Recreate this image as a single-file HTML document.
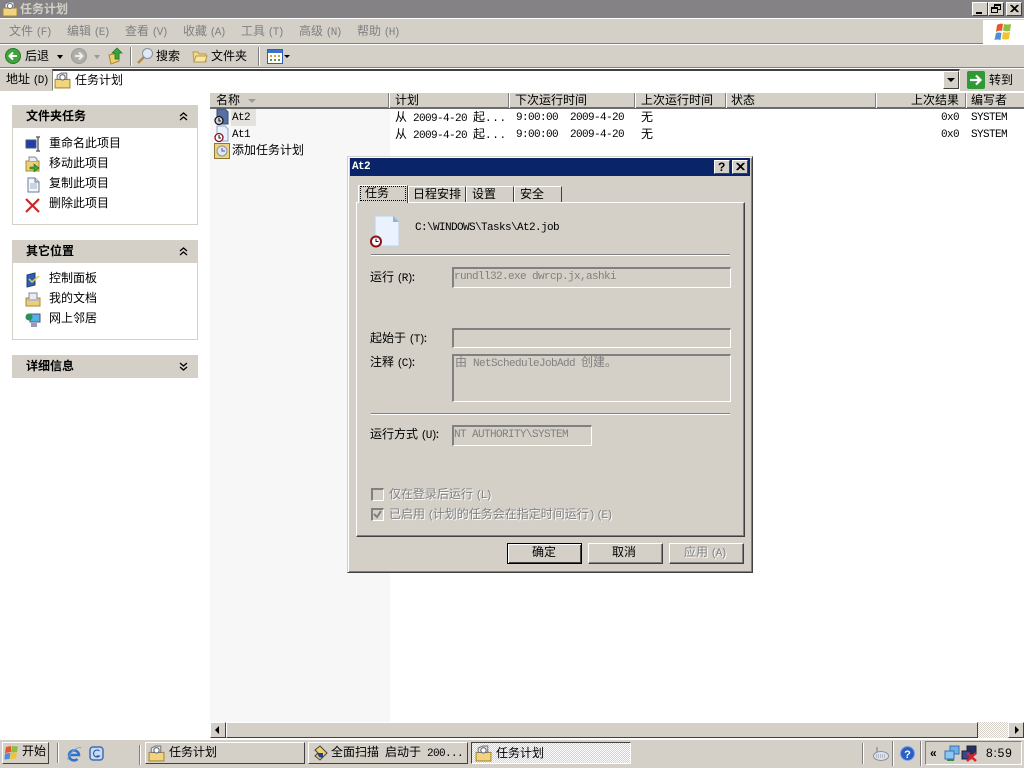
<!DOCTYPE html>
<html><head><meta charset="utf-8"><title>任务计划</title>
<style>
html,body{margin:0;padding:0;width:1024px;height:768px;overflow:hidden;background:#fff}
body{position:relative;font:12px/14px "WenQuanYi Zen Hei","Noto Sans CJK SC",sans-serif;color:#000}
div,span,svg{position:absolute;box-sizing:border-box}
span{white-space:pre}
span span,span b{position:static}
body>span{margin-top:-1px}
.m{font-family:"Liberation Mono",monospace;font-size:11px;letter-spacing:-.6px}
body>.m{margin-top:1px}
.k{font-family:"Liberation Mono",monospace;font-size:11px;letter-spacing:-1.6px}
.g{color:#808080}
.d{color:#808080;text-shadow:1px 1px 0 #fff}
.b{font-weight:bold}
.bg{background:#d4d0c8}
.ra{border:1px solid;border-color:#fff #404040 #404040 #fff;background:#d4d0c8}
.sk{border:1px solid;border-color:#808080 #fff #fff #808080;background:#d4d0c8;border-left-width:2px;border-top-width:2px}
.hr{height:2px;border-top:1px solid #808080;border-bottom:1px solid #fff}
.tb{top:742px;height:22px;border:1px solid;border-color:#fff #404040 #404040 #fff;background:#d4d0c8}
.dither{background:repeating-conic-gradient(#fff 0 25%,#d4d0c8 0 50%) 0 0/2px 2px}
.hs{top:93px;width:2px;height:15px;background:#808080;border-right:1px solid #fff}
.sb{left:12px;width:186px;background:#d4d0c8;height:23px}
.sbody{left:12px;width:186px;border:1px solid #d4d0c8;border-top:0;background:#fff}
</style></head><body>

<!-- title bar -->
<div style="left:0;top:0;width:1024px;height:18px;background:#848284"></div>
<svg style="left:2px;top:1px" width="16" height="16" viewBox="0 0 16 16"><path d="M1 7h14v8H1z" fill="#f3d47e" stroke="#a98a35"/><path d="M3 7V3l4-2h5v6z" fill="#e8eef4" stroke="#777"/><circle cx="8" cy="5" r="2.500" fill="#fff" stroke="#667"/></svg>
<span style="left:20px;top:3px;color:#d4d0c8;font-weight:bold">任务计划</span>
<div class="ra" style="left:972px;top:2px;width:16px;height:14px"><div style="left:3px;top:9px;width:6px;height:2px;background:#000"></div></div>
<div class="ra" style="left:988px;top:2px;width:16px;height:14px"><div style="left:5px;top:1px;width:7px;height:6px;border:1px solid #000;border-top-width:2px"></div><div style="left:2px;top:4px;width:7px;height:6px;border:1px solid #000;border-top-width:2px;background:#d4d0c8"></div></div>
<div class="ra" style="left:1006px;top:2px;width:16px;height:14px"><svg style="left:2px;top:1px" width="11" height="10" viewBox="0 0 11 10"><path d="M1.500 1l7 7M2.500 1l7 7M8.500 1l-7 7M9.500 1l-7 7" stroke="#000" stroke-width="1"/></svg></div>

<!-- chrome -->
<div class="bg" style="left:0;top:18px;width:1024px;height:74px"></div>
<div style="left:0;top:18px;width:1024px;height:1px;background:#fff"></div>
<div style="left:0;top:43px;width:983px;height:1px;background:#808080"></div>
<div style="left:0;top:44px;width:1024px;height:1px;background:#fff"></div>
<div style="left:0;top:67px;width:1024px;height:1px;background:#808080"></div>
<div style="left:0;top:68px;width:1024px;height:1px;background:#fff"></div>
<div style="left:0;top:91px;width:1024px;height:1px;background:#fff"></div>

<!-- menu -->
<span class="g" style="left:9px;top:25px">文件 <span class="k">(F)</span></span>
<span class="g" style="left:67px;top:25px">编辑 <span class="k">(E)</span></span>
<span class="g" style="left:125px;top:25px">查看 <span class="k">(V)</span></span>
<span class="g" style="left:183px;top:25px">收藏 <span class="k">(A)</span></span>
<span class="g" style="left:241px;top:25px">工具 <span class="k">(T)</span></span>
<span class="g" style="left:299px;top:25px">高级 <span class="k">(N)</span></span>
<span class="g" style="left:357px;top:25px">帮助 <span class="k">(H)</span></span>
<div style="left:983px;top:20px;width:41px;height:24px;background:#fff"></div>
<svg style="left:993px;top:22px" width="20" height="20" viewBox="0 0 20 20"><path d="M4 3q3-2 6-1l-1 7q-3-1-6 1z" fill="#e8562a"/><path d="M11 2q3 1 7 0l-1 7q-4 1-7-.5z" fill="#8cbf3f"/><path d="M3 11q3-1 5.500 0l-1 7q-3-1-6 0z" fill="#4a90d9"/><path d="M10 10q3 1 7 0l-1 7q-4 1-7 0z" fill="#f2c230"/></svg>

<!-- toolbar -->
<svg style="left:5px;top:48px" width="16" height="16" viewBox="0 0 16 16"><circle cx="8" cy="8" r="7.500" fill="#3da53a" stroke="#2a7a2a"/><path d="M12 8H5M8 4.500L4.500 8 8 11.500" stroke="#fff" stroke-width="2" fill="none"/></svg>
<span style="left:25px;top:50px">后退</span>
<div style="left:57px;top:55px;border:3.500px solid transparent;border-top:4px solid #000;border-bottom:0"></div>
<svg style="left:71px;top:48px" width="16" height="16" viewBox="0 0 16 16"><circle cx="8" cy="8" r="7.500" fill="#b0aea8" stroke="#999"/><path d="M4 8h7M8 4.500L11.500 8 8 11.500" stroke="#eee" stroke-width="2" fill="none"/></svg>
<div style="left:94px;top:55px;border:3.500px solid transparent;border-top:4px solid #999;border-bottom:0"></div>
<svg style="left:108px;top:47px" width="16" height="18" viewBox="0 0 16 18"><path d="M1 8l10-2v8L3 17z" fill="#f0cf6c" stroke="#a98a35"/><path d="M9 1l5 5h-3v6H7V6H4z" fill="#3aa53a" stroke="#1c6e1c" stroke-width=".7"/></svg>
<div style="left:130px;top:47px;width:2px;height:19px;background:#808080;border-right:1px solid #fff"></div>
<svg style="left:137px;top:47px" width="17" height="18" viewBox="0 0 17 18"><circle cx="10.500" cy="6.500" r="5" fill="#dfeaf7" stroke="#8a8f9a"/><path d="M7 10l-6 6" stroke="#b98a40" stroke-width="2.500"/></svg>
<span style="left:156px;top:50px">搜索</span>
<svg style="left:192px;top:48px" width="16" height="16" viewBox="0 0 16 16"><path d="M1 4h5l1 2h7v8H2z" fill="#f3d98a" stroke="#b59a4a"/><path d="M4 8h11l-2 6H2z" fill="#f8e7a8" stroke="#b59a4a"/></svg>
<span style="left:211px;top:50px">文件夹</span>
<div style="left:258px;top:47px;width:2px;height:19px;background:#808080;border-right:1px solid #fff"></div>
<svg style="left:267px;top:49px" width="16" height="15" viewBox="0 0 16 15"><rect x=".5" y=".5" width="15" height="14" fill="#fff" stroke="#2f5fb0"/><rect x="1" y="1" width="14" height="3" fill="#3a72c8"/><path d="M3 6h2v2H3zM7 6h2v2H7zM11 6h2v2h-2z" fill="#e0a030"/><path d="M3 10h2v2H3zM7 10h2v2H7zM11 10h2v2h-2z" fill="#5a9a50"/></svg>
<div style="left:284px;top:55px;border:3px solid transparent;border-top:3px solid #000;border-bottom:0"></div>

<!-- address -->
<span style="left:6px;top:73px">地址 <span class="k">(D)</span></span>
<div style="left:52px;top:69px;width:908px;height:22px;background:#fff;border:1px solid;border-color:#404040 #fff #fff #808080;border-top-width:2px"></div>
<svg style="left:54px;top:72px" width="17" height="17" viewBox="0 0 16 16"><path d="M1 7h14v8H1z" fill="#f3d47e" stroke="#a98a35"/><path d="M3 7V3l4-2h5v6z" fill="#e8eef4" stroke="#777"/><circle cx="8" cy="5" r="2.500" fill="#fff" stroke="#667"/></svg>
<span style="left:75px;top:74px">任务计划</span>
<div class="ra" style="left:943px;top:71px;width:16px;height:18px"><div style="left:3px;top:6px;border:4px solid transparent;border-top:4px solid #000;border-bottom:0"></div></div>
<div style="left:967px;top:71px;width:18px;height:18px;background:#2f9a35;border-radius:2px"></div>
<svg style="left:967px;top:71px" width="18" height="18" viewBox="0 0 18 18"><path d="M3 9h10M9 4.500L13.500 9 9 13.500" stroke="#fff" stroke-width="2.200" fill="none"/></svg>
<span style="left:989px;top:74px">转到</span>

<!-- list view -->
<div style="left:210px;top:108px;width:180px;height:614px;background:#f7f7f7"></div>
<div class="bg" style="left:210px;top:93px;width:814px;height:15px"></div>
<div style="left:210px;top:107px;width:814px;height:2px;background:#6b6b6b"></div>
<div class="hs" style="left:388px"></div>
<div class="hs" style="left:508px"></div>
<div class="hs" style="left:634px"></div>
<div class="hs" style="left:725px"></div>
<div class="hs" style="left:875px"></div>
<div class="hs" style="left:965px"></div>
<span style="left:216px;top:94px">名称</span>
<div style="left:248px;top:99px;border:4px solid transparent;border-top:4px solid #9a9a9a;border-bottom:0"></div>
<span style="left:395px;top:94px">计划</span>
<span style="left:515px;top:94px">下次运行时间</span>
<span style="left:641px;top:94px">上次运行时间</span>
<span style="left:731px;top:94px">状态</span>
<span style="left:911px;top:94px">上次结果</span>
<span style="left:971px;top:94px">编写者</span>

<!-- rows -->
<div style="left:231px;top:109px;width:25px;height:17px;background:#e4e2dd"></div>
<svg style="left:213px;top:108px" width="17" height="18" viewBox="0 0 17 18"><path d="M4 1h8l3 3v12H4z" fill="#56709f" stroke="#3a4f7a"/><circle cx="6" cy="12.500" r="4" fill="#cfd3dc" stroke="#16161e" stroke-width="1.300"/><path d="M6 10v3h2" stroke="#111" fill="none"/></svg>
<span class="m" style="left:232px;top:110px">At2</span>
<svg style="left:213px;top:125px" width="17" height="18" viewBox="0 0 17 18"><path d="M4 1h8l3 3v12H4z" fill="#eaf1fb" stroke="#8ea6c7"/><circle cx="6" cy="12.500" r="4" fill="#fff" stroke="#8a1018" stroke-width="1.300"/><path d="M6 10v3h2" stroke="#111" fill="none"/></svg>
<span class="m" style="left:232px;top:127px">At1</span>
<svg style="left:214px;top:143px" width="16" height="16" viewBox="0 0 16 16"><rect x=".5" y=".5" width="15" height="15" fill="#efd27a" stroke="#8a7a3a"/><circle cx="8" cy="8" r="5" fill="#dfe7f5" stroke="#8a93a8"/><path d="M8 5v3h3" stroke="#557" fill="none"/></svg>
<span style="left:232px;top:144px">添加任务计划</span>

<span style="left:395px;top:111px">从<span class="m"> 2009-4-20 </span>起<span class="m" style="letter-spacing:.6px">...</span></span>
<span style="left:395px;top:128px">从<span class="m"> 2009-4-20 </span>起<span class="m" style="letter-spacing:.6px">...</span></span>
<span class="m" style="left:516px;top:110px">9:00:00  2009-4-20</span>
<span class="m" style="left:516px;top:127px">9:00:00  2009-4-20</span>
<span style="left:641px;top:111px">无</span>
<span style="left:641px;top:128px">无</span>
<span class="m" style="left:941px;top:110px">0x0</span>
<span class="m" style="left:941px;top:127px">0x0</span>
<span class="m" style="left:971px;top:110px">SYSTEM</span>
<span class="m" style="left:971px;top:127px">SYSTEM</span>

<!-- sidebar -->
<div class="sb" style="top:105px"></div>
<span class="b" style="left:26px;top:110px">文件夹任务</span>
<svg style="left:179px;top:112px" width="9" height="9" viewBox="0 0 9 9"><path d="M1 4l3.500-3L8 4M1 8l3.500-3L8 8" stroke="#000" stroke-width="1.300" fill="none"/></svg>
<div class="sbody" style="top:128px;height:97px"></div>
<svg style="left:25px;top:136px" width="17" height="16" viewBox="0 0 17 16"><rect x="1" y="4" width="10" height="8" fill="#1c3fae" stroke="#556"/><path d="M13 1v14M11 1h4M11 15h4" stroke="#667" stroke-width="1.500"/></svg>
<span style="left:49px;top:137px">重命名此项目</span>
<svg style="left:25px;top:156px" width="16" height="16" viewBox="0 0 16 16"><path d="M1 5h13v10H1z" fill="#efce74" stroke="#a98a35"/><path d="M4 5V1h6l2 2v2" fill="#e6ecf4" stroke="#889"/><path d="M5 11h4V8l5 4-5 4v-3H5z" fill="#3da53a" stroke="#1c6e1c" stroke-width=".6"/></svg>
<span style="left:49px;top:157px">移动此项目</span>
<svg style="left:26px;top:177px" width="15" height="16" viewBox="0 0 15 16"><path d="M2 1h7l4 4v10H2z" fill="#f3f7fc" stroke="#6b7c96"/><path d="M9 1v4h4" fill="#cfdbea" stroke="#6b7c96"/><path d="M4 7h7M4 9h7M4 11h7" stroke="#9fb0c6"/></svg>
<span style="left:49px;top:177px">复制此项目</span>
<svg style="left:25px;top:198px" width="15" height="15" viewBox="0 0 15 15"><path d="M1 1l13 13M14 1L1 14" stroke="#c8282c" stroke-width="2.200"/></svg>
<span style="left:49px;top:197px">删除此项目</span>

<div class="sb" style="top:240px"></div>
<span class="b" style="left:26px;top:245px">其它位置</span>
<svg style="left:179px;top:247px" width="9" height="9" viewBox="0 0 9 9"><path d="M1 4l3.500-3L8 4M1 8l3.500-3L8 8" stroke="#000" stroke-width="1.300" fill="none"/></svg>
<div class="sbody" style="top:263px;height:77px"></div>
<svg style="left:25px;top:272px" width="16" height="16" viewBox="0 0 16 16"><path d="M2 3l8-2v12l-8 2z" fill="#2f5fa8" stroke="#1f3f78"/><path d="M4 7l3 3 7-6" stroke="#e8c860" stroke-width="1.500" fill="none"/></svg>
<span style="left:49px;top:272px">控制面板</span>
<svg style="left:25px;top:291px" width="16" height="16" viewBox="0 0 16 16"><path d="M1 7h14v8H1z" fill="#efce74" stroke="#a98a35"/><path d="M4 9V2h8v7" fill="#e9edf3" stroke="#889"/><path d="M2 9h12" stroke="#b9bcc4" stroke-width="2"/></svg>
<span style="left:49px;top:292px">我的文档</span>
<svg style="left:25px;top:312px" width="16" height="16" viewBox="0 0 16 16"><rect x="5" y="2" width="10" height="8" fill="#4fb4e6" stroke="#557"/><circle cx="4" cy="5" r="3.500" fill="#2f8f5a"/><rect x="6" y="11" width="6" height="4" fill="#9a9ab8"/></svg>
<span style="left:49px;top:312px">网上邻居</span>

<div class="sb" style="top:355px"></div>
<span class="b" style="left:26px;top:360px">详细信息</span>
<svg style="left:179px;top:362px" width="9" height="9" viewBox="0 0 9 9"><path d="M1 1l3.500 3L8 1M1 5l3.500 3L8 5" stroke="#000" stroke-width="1.300" fill="none"/></svg>

<!-- h scrollbar -->
<div class="dither" style="left:210px;top:722px;width:814px;height:16px"></div>
<div class="ra" style="left:210px;top:722px;width:16px;height:16px"><div style="left:4px;top:3px;border:4px solid transparent;border-right:4px solid #000;border-left:0"></div></div>
<div class="ra" style="left:226px;top:722px;width:752px;height:16px"></div>
<div class="ra" style="left:1008px;top:722px;width:16px;height:16px"><div style="left:6px;top:3px;border:4px solid transparent;border-left:4px solid #000;border-right:0"></div></div>

<!-- dialog -->
<div class="bg" style="left:347px;top:156px;width:406px;height:417px;border:1px solid;border-color:#d4d0c8 #404040 #404040 #d4d0c8;box-shadow:inset 1px 1px 0 #fff,inset -1px -1px 0 #808080"></div>
<div style="left:350px;top:158px;width:400px;height:18px;background:#0a246a"></div>
<span class="m" style="left:352px;top:159px;color:#fff;font-weight:bold">At2</span>
<div class="ra" style="left:714px;top:160px;width:16px;height:14px"><span style="left:3px;top:0;font:bold 12px/13px 'Liberation Sans',sans-serif">?</span></div>
<div class="ra" style="left:732px;top:160px;width:16px;height:14px"><svg style="left:2px;top:1px" width="11" height="10" viewBox="0 0 11 10"><path d="M1.500 1l7 7M2.500 1l7 7M8.500 1l-7 7M9.500 1l-7 7" stroke="#000"/></svg></div>

<!-- tabs -->
<div class="bg" style="left:356px;top:202px;width:389px;height:335px;border:1px solid;border-color:#fff #404040 #404040 #fff;box-shadow:inset -1px -1px 0 #808080"></div>
<div class="bg" style="left:358px;top:185px;width:50px;height:18px;border:1px solid;border-color:#fff #404040 transparent #fff;border-bottom:0"></div>
<div style="left:360px;top:186px;width:46px;height:15px;border:1px dotted #000"></div>
<span style="left:365px;top:187px">任务</span>
<div class="bg" style="left:408px;top:186px;width:58px;height:16px;border:1px solid;border-color:#fff #404040 transparent #fff;border-bottom:0"></div>
<span style="left:413px;top:188px">日程安排</span>
<div class="bg" style="left:466px;top:186px;width:48px;height:16px;border:1px solid;border-color:#fff #404040 transparent #fff;border-bottom:0"></div>
<span style="left:472px;top:188px">设置</span>
<div class="bg" style="left:514px;top:186px;width:48px;height:16px;border:1px solid;border-color:#fff #404040 transparent #fff;border-bottom:0"></div>
<span style="left:520px;top:188px">安全</span>

<svg style="left:369px;top:214px" width="32" height="34" viewBox="0 0 32 34"><path d="M6 2h18l6 6v24H6z" fill="#eaf2fd" stroke="#bcd0e8"/><path d="M24 2l6 6h-6z" fill="#8db4dd"/><circle cx="7" cy="27.500" r="5" fill="#fff" stroke="#8a1018" stroke-width="2"/><path d="M7 24.500v3h2.500" stroke="#111" fill="none"/></svg>
<span class="m" style="left:415px;top:220px">C:\WINDOWS\Tasks\At2.job</span>
<div class="hr" style="left:371px;top:254px;width:359px"></div>

<span style="left:370px;top:271px">运行 <span class="k">(R)</span>:</span>
<div class="sk" style="left:452px;top:267px;width:279px;height:21px"></div>
<span class="m g" style="left:454px;top:269px">rundll32.exe dwrcp.jx,ashki</span>

<span style="left:370px;top:332px">起始于 <span class="k">(T)</span>:</span>
<div class="sk" style="left:452px;top:328px;width:279px;height:20px"></div>

<span style="left:370px;top:356px">注释 <span class="k">(C)</span>:</span>
<div class="sk" style="left:452px;top:354px;width:279px;height:48px"></div>
<span class="g" style="left:455px;top:356px">由<span class="m"> NetScheduleJobAdd </span>创建。</span>
<div class="hr" style="left:371px;top:413px;width:359px"></div>

<span style="left:370px;top:428px">运行方式 <span class="k">(U)</span>:</span>
<div class="sk" style="left:452px;top:425px;width:140px;height:21px"></div>
<span class="m g" style="left:454px;top:427px">NT AUTHORITY\SYSTEM</span>

<div class="sk" style="left:371px;top:488px;width:13px;height:13px"></div>
<span class="d" style="left:389px;top:488px">仅在登录后运行 <span class="k">(L)</span></span>
<div class="sk" style="left:371px;top:508px;width:13px;height:13px"></div>
<svg style="left:373px;top:510px" width="9" height="9" viewBox="0 0 9 9"><path d="M1 4l3 3 4-6" stroke="#808080" stroke-width="2" fill="none"/></svg>
<span class="d" style="left:389px;top:508px">已启用 <span class="k">(</span>计划的任务会在指定时间运行<span class="k">)</span> <span class="k">(E)</span></span>

<div class="ra" style="left:507px;top:543px;width:75px;height:21px;border:1px solid #000;box-shadow:inset 1px 1px 0 #fff,inset -1px -1px 0 #404040"></div>
<span style="left:532px;top:546px">确定</span>
<div class="ra" style="left:588px;top:543px;width:75px;height:21px;box-shadow:inset -1px -1px 0 #808080"></div>
<span style="left:612px;top:546px">取消</span>
<div class="ra" style="left:669px;top:543px;width:75px;height:21px;box-shadow:inset -1px -1px 0 #808080"></div>
<span class="d" style="left:684px;top:546px">应用 <span class="k">(A)</span></span>

<!-- taskbar -->
<div class="bg" style="left:0;top:739px;width:1024px;height:29px;border-top:1px solid #fff"></div>
<div class="tb" style="left:2px;width:47px"></div>
<svg style="left:4px;top:745px" width="16" height="15" viewBox="0 0 16 15"><path d="M2 2l5-1v6l-6 1z" fill="#e8562a"/><path d="M8 1l6 .5-1 5.500-6 .5z" fill="#8cbf3f"/><path d="M1 8.500l5.500-.5-1 6-5 .5z" fill="#4a90d9"/><path d="M7 8l6-.5-1 6-6 .5z" fill="#f2c230"/></svg>
<span style="left:22px;top:745px">开始</span>
<div style="left:57px;top:743px;width:2px;height:20px;background:#808080;border-right:1px solid #fff"></div>
<svg style="left:66px;top:746px" width="16" height="16" viewBox="0 0 16 16"><path d="M3 9h10a5 5 0 1 0-1.500 4" fill="none" stroke="#2f72c8" stroke-width="2.500"/><path d="M2 14q-1-3 5-9 6-5 8-3" fill="none" stroke="#6aa8e8"/></svg>
<svg style="left:89px;top:746px" width="15" height="15" viewBox="0 0 15 15"><rect x="1" y="1" width="13" height="13" rx="3" fill="#c8daf2" stroke="#3f6fb0" stroke-width="1.500"/><path d="M10.500 5a3.500 3.500 0 1 0 0 5h-3" stroke="#27509a" fill="none"/></svg>
<div style="left:139px;top:745px;width:2px;height:20px;background:#808080;border-right:1px solid #fff"></div>

<div class="tb" style="left:145px;width:160px"></div>
<svg style="left:148px;top:745px" width="17" height="17" viewBox="0 0 16 16"><path d="M1 7h14v8H1z" fill="#f3d47e" stroke="#a98a35"/><path d="M3 7V3l4-2h5v6z" fill="#e8eef4" stroke="#777"/><circle cx="8" cy="5" r="2.500" fill="#fff" stroke="#667"/></svg>
<span style="left:169px;top:746px">任务计划</span>
<div class="tb" style="left:308px;width:160px"></div>
<svg style="left:313px;top:745px" width="15" height="16" viewBox="0 0 15 16"><path d="M7 1l7 7-7 7-5-4 3-3-3-3z" fill="#e9d070" stroke="#443"/><path d="M4 8h6v5l-4-1z" fill="#27408a"/></svg>
<span style="left:331px;top:746px">全面扫描<span class="m"> </span>启动于<span class="m"> 200...</span></span>
<div class="dither" style="left:471px;top:742px;width:160px;height:22px;border:1px solid;border-color:#404040 #fff #fff #404040"></div>
<svg style="left:475px;top:745px" width="17" height="17" viewBox="0 0 16 16"><path d="M1 7h14v8H1z" fill="#f3d47e" stroke="#a98a35"/><path d="M3 7V3l4-2h5v6z" fill="#e8eef4" stroke="#777"/><circle cx="8" cy="5" r="2.500" fill="#fff" stroke="#667"/></svg>
<span style="left:496px;top:747px">任务计划</span>

<div style="left:862px;top:743px;width:2px;height:21px;background:#808080;border-right:1px solid #fff"></div>
<svg style="left:872px;top:746px" width="17" height="16" viewBox="0 0 17 16"><path d="M5 1v5" stroke="#778"/><ellipse cx="9" cy="10" rx="7.500" ry="4.500" fill="#dfe3ea" stroke="#8a8f9a"/><path d="M4 9h10M4 11h10" stroke="#8090a8" stroke-dasharray="1 1"/></svg>
<div style="left:892px;top:741px;width:2px;height:25px;background:#808080;border-right:1px solid #fff"></div>
<svg style="left:900px;top:746px" width="15" height="15" viewBox="0 0 15 15"><circle cx="7.500" cy="7.500" r="7" fill="#2a5fc4" stroke="#7fa3e0"/><text x="7.500" y="12" text-anchor="middle" fill="#fff" font-family="Liberation Sans" font-weight="bold" font-size="11">?</text></svg>
<div style="left:920px;top:741px;width:2px;height:25px;background:#808080;border-right:1px solid #fff"></div>
<div style="left:925px;top:741px;width:97px;height:24px;border:1px solid;border-color:#808080 #fff #fff #808080"></div>
<span class="b" style="left:930px;top:747px;font-family:'Liberation Sans',sans-serif;font-size:12px">«</span>
<svg style="left:944px;top:745px" width="16" height="17" viewBox="0 0 16 17"><rect x="6" y="1" width="9" height="8" fill="#6db2ea" stroke="#3a6fb0"/><rect x="1" y="6" width="9" height="8" fill="#8cc6f2" stroke="#3a6fb0"/><path d="M3 15h7" stroke="#3a8a3a" stroke-width="2"/></svg>
<svg style="left:961px;top:745px" width="17" height="17" viewBox="0 0 17 17"><rect x="6" y="1" width="9" height="8" fill="#25306a" stroke="#223"/><rect x="1" y="6" width="9" height="8" fill="#37478a" stroke="#223"/><path d="M6 8l9 8M15 8l-9 8" stroke="#d8232a" stroke-width="2.500"/></svg>
<span style="left:986px;top:747px;font-family:'Liberation Sans',sans-serif;font-size:12px;letter-spacing:.8px">8:59</span>
</body></html>
